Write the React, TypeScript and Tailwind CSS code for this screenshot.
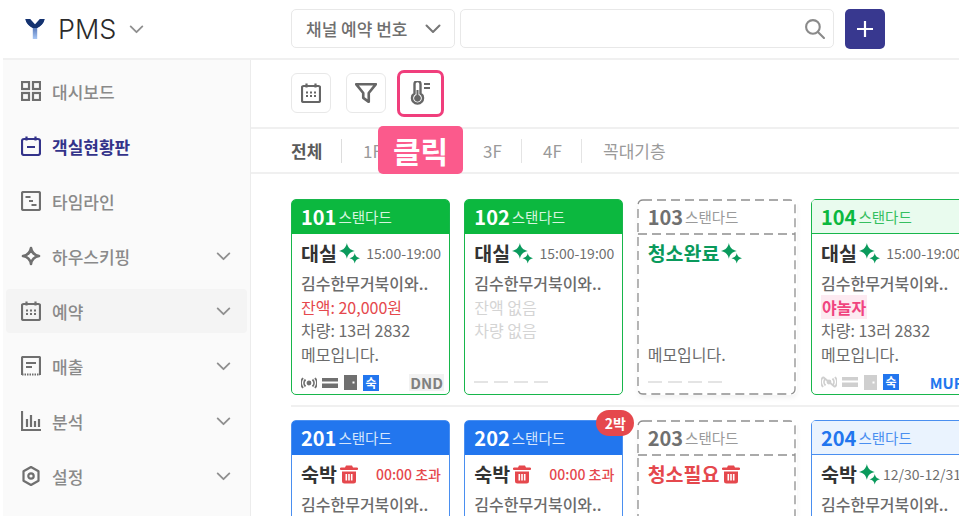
import React from 'react';

const FONT = '"Noto Sans CJK KR", "Noto Sans", sans-serif';

const Chevron = ({ className = '' }: { className?: string }) => (
  <svg viewBox="0 0 16 10" className={className} fill="none" stroke="currentColor" strokeWidth="2" strokeLinecap="round" strokeLinejoin="round">
    <path d="M1.500 1.500 8 8l6.500-6.500" />
  </svg>
);

const Sparkles = () => (
  <svg viewBox="0 0 20 20" className="w-[21px] h-[21px] ml-[2px] shrink-0 text-[#0a9a5c]" fill="currentColor">
    <path d="M7.500 0 C8.500 4.500 10.500 6.500 15 7.500 C10.500 8.500 8.500 10.500 7.500 15 C6.500 10.500 4.500 8.500 0 7.500 C4.500 6.500 6.500 4.500 7.500 0Z" />
    <path d="M15 9.500 C15.600 12.500 16.800 13.700 20 14.500 C16.800 15.300 15.600 16.500 15 19.500 C14.400 16.500 13.200 15.300 10 14.500 C13.200 13.700 14.400 12.500 15 9.500Z" />
  </svg>
);

const Trash = () => (
  <svg viewBox="0 0 18 20" className="w-[18px] h-[20px] shrink-0 text-[#e5484d]" fill="currentColor">
    <path d="M6 1.500h6l1 2h4a1 1 0 0 1 0 2.500H1a1 1 0 0 1 0-2.500h4z" />
    <path fillRule="evenodd" d="M2 7.500h14v9.500a2.500 2.500 0 0 1-2.500 2.500h-9A2.500 2.500 0 0 1 2 17zM5.500 10v6.500h1.600V10zm2.700 0v6.500h1.600V10zm2.700 0v6.500h1.600V10z" />
  </svg>
);

const GridIcon = () => (
  <svg viewBox="0 0 20 20" className="w-[20px] h-[20px]" fill="none" stroke="currentColor" strokeWidth="2.200">
    <rect x="1" y="1" width="7" height="7" /><rect x="12" y="1" width="7" height="7" />
    <rect x="1" y="12" width="7" height="7" /><rect x="12" y="12" width="7" height="7" />
  </svg>
);

const BoardIcon = () => (
  <svg viewBox="0 0 20 20" className="w-[20px] h-[20px]" fill="none" stroke="currentColor" strokeWidth="2.200" strokeLinejoin="round">
    <rect x="1" y="3" width="18" height="16" rx="2" />
    <path d="M5.500 0.500v4M14.500 0.500v4M6 11h8" />
  </svg>
);

const TimelineIcon = () => (
  <svg viewBox="0 0 20 20" className="w-[20px] h-[20px]" fill="none" stroke="currentColor" strokeWidth="2.200">
    <rect x="1" y="1" width="18" height="18" rx="1.500" />
    <path d="M4.500 6h5M8 10h4M10.500 14h5" />
  </svg>
);

const StarIcon = () => (
  <svg viewBox="0 0 20 20" className="w-[20px] h-[20px]" fill="none" stroke="currentColor" strokeWidth="2.600" strokeLinejoin="round">
    <path d="M10 2c.8 5 3 7.200 8 8-5 .8-7.200 3-8 8-.8-5-3-7.200-8-8 5-.8 7.200-3 8-8z" />
  </svg>
);

const CalendarIcon = () => (
  <svg viewBox="0 0 20 20" className="w-[20px] h-[20px]" fill="none" stroke="currentColor" strokeWidth="2.200" strokeLinejoin="round">
    <rect x="1" y="3" width="18" height="16" rx="1.500" />
    <path d="M5.500 0.500v4M14.500 0.500v4" />
    <path d="M5 9.500h2M9 9.500h2M13 9.500h2M5 13h2M9 13h2M13 13h2" strokeWidth="1.800" />
  </svg>
);

const ReceiptIcon = () => (
  <svg viewBox="0 0 20 20" className="w-[20px] h-[20px]" fill="none" stroke="currentColor" strokeWidth="2.200">
    <path d="M1 19V2a1 1 0 0 1 1-1h16a1 1 0 0 1 1 1v17" />
    <path d="M5 7h10M5 11h6" />
    <path d="M1 18.500h18" strokeDasharray="1.500 1" />
  </svg>
);

const ChartIcon = () => (
  <svg viewBox="0 0 20 20" className="w-[20px] h-[20px]" fill="none" stroke="currentColor" strokeWidth="2.200">
    <path d="M1 0v19h19" /><path d="M6 8v8M10 4v12M14 10v6M18 8v8" />
  </svg>
);

const GearIcon = () => (
  <svg viewBox="0 0 20 20" className="w-[20px] h-[20px]" fill="none" stroke="currentColor" strokeWidth="2.200" strokeLinejoin="round">
    <path d="M10 1l7.500 4.300v9.400L10 19l-7.500-4.300V5.300z" />
    <circle cx="10" cy="10" r="2.700" />
  </svg>
);

const MENU = [
  { label: '대시보드', icon: <GridIcon /> },
  { label: '객실현황판', icon: <BoardIcon />, active: true },
  { label: '타임라인', icon: <TimelineIcon /> },
  { label: '하우스키핑', icon: <StarIcon />, more: true },
  { label: '예약', icon: <CalendarIcon />, more: true, hover: true },
  { label: '매출', icon: <ReceiptIcon />, more: true },
  { label: '분석', icon: <ChartIcon />, more: true },
  { label: '설정', icon: <GearIcon />, more: true },
];

const Sidebar = () => (
  <aside className="w-[248px] shrink-0 bg-[#fafafa] border-r border-[#ececec] pt-[9px] px-[3px] flex flex-col gap-[11px]">
    {MENU.map(m => (
      <div
        key={m.label}
        className={`h-[44px] shrink-0 rounded-[4px] flex items-center pl-[15px] pr-[16px] gap-[11px] ${m.hover ? 'bg-[#f4f4f4]' : ''} ${m.active ? 'text-[#33338a]' : 'text-[#6f6f6f]'}`}
      >
        {m.icon}
        <span className={`text-[17px] leading-none flex-1 ${m.active ? 'font-bold' : 'font-medium text-[#8a8a8a]'}`}>{m.label}</span>
        {m.more && <Chevron className="w-[15px] h-[9px] text-[#8f8f8f]" />}
      </div>
    ))}
  </aside>
);

const Suk = () => (
  <span className="w-[16px] h-[16px] flex items-center justify-center bg-[#2276ee] text-white text-[12px] leading-none font-bold">숙</span>
);

const FooterIcons = ({ off }: { off?: boolean }) => (
  <div className={`flex items-center gap-[5px] ${off ? 'text-[#cfcfcf]' : 'text-[#707070]'}`}>
    <svg viewBox="0 0 16 12" className="w-[16px] h-[12px]" fill="none" stroke="currentColor" strokeWidth="1.800">
      <circle cx="8" cy="6" r="1.500" fill="currentColor" />
      <path d="M4.500 2.500a5 5 0 0 0 0 7M11.500 2.500a5 5 0 0 1 0 7M2 1a8 8 0 0 0 0 10M14 1a8 8 0 0 1 0 10" />
      {off && <path d="M2 1l12 10" />}
    </svg>
    <svg viewBox="0 0 16 12" className="w-[16px] h-[12px]" fill="currentColor">
      <rect x="0" y="1" width="16" height="3.500" /><rect x="0" y="6.500" width="16" height="4.500" />
    </svg>
    <svg viewBox="0 0 13 15" className="w-[13px] h-[15px] mx-[1px]" fill="currentColor">
      <path fillRule="evenodd" d="M0 0h13v15H0zM8.500 6.500v2h2v-2z" />
    </svg>
    <Suk />
  </div>
);

const Dashes = () => (
  <div className="flex gap-[6px] h-[16px] items-center">
    {[0, 1, 2, 3].map(i => <div key={i} className="w-[14px] h-[2px] bg-[#e4e4e4]" />)}
  </div>
);

type CardProps = {
  no: string;
  tone: 'green' | 'blue' | 'lightGreen' | 'lightBlue' | 'dashed';
  status: string;
  statusColor?: string;
  icon?: 'spark' | 'trash';
  time?: string;
  timeRed?: boolean;
  lines?: React.ReactNode[];
  footer?: React.ReactNode;
  badge?: string;
};

const TONES = {
  green: { box: 'border-[#17b64b]', head: 'bg-[#0cb83f] text-white', sub: 'text-[#d6f5df]' },
  blue: { box: 'border-[#4a8ff0]', head: 'bg-[#2276ee] text-white', sub: 'text-[#d5e5fc]' },
  lightGreen: { box: 'border-[#17b64b]', head: 'bg-[#e9fbee] text-[#0cb83f] border-b border-[#17b64b]', sub: 'text-[#35bf60]' },
  lightBlue: { box: 'border-[#4a8ff0]', head: 'bg-[#eaf3fe] text-[#2276ee] border-b border-[#4a8ff0]', sub: 'text-[#4a8ff0]' },
  dashed: { box: 'border-transparent', head: 'text-[#707070]', sub: 'text-[#9a9a9a]' },
};

const Card = ({ no, tone, status, statusColor = 'text-[#333333]', icon, time, timeRed, lines = [], footer, badge }: CardProps) => {
  const t = TONES[tone];
  return (
    <div className={`relative w-[159px] h-[196px] shrink-0 rounded-[5px] border-[1.5px] bg-white ${t.box} ${tone === 'dashed' ? 'shadow-[0_3px_5px_rgba(0,0,0,0.05)]' : ''}`}>
      {tone === 'dashed' && (
        <svg width="159" height="196" className="absolute -left-[1.5px] -top-[1.5px] text-[#8f8f8f]" fill="none" stroke="currentColor" strokeWidth="1.300">
          <rect x="1" y="1" width="157" height="194" rx="5" strokeDasharray="9 5" />
          <path d="M1 35h157" strokeDasharray="9 5" />
        </svg>
      )}
      {badge && (
        <div className="absolute -top-[11px] -right-[12px] z-10 w-[38px] h-[26px] rounded-full bg-[#e5484d] text-white text-[14px] font-bold leading-[26px] text-center">{badge}</div>
      )}
      <div className={`h-[34px] flex items-center pl-[9px] gap-[2px] rounded-t-[3px] overflow-hidden ${t.head}`}>
        <span className="text-[20px] font-bold leading-none">{no}</span>
        <span className={`text-[14.500px] leading-none mt-[1px] ${t.sub}`}>스탠다드</span>
      </div>
      <div className="h-[160px] pl-[9px] pr-[8px] pt-[7px] flex flex-col">
        <div className="flex items-center h-[24px] whitespace-nowrap">
          <span className={`text-[19.500px] font-bold leading-none ${statusColor}`}>{status}</span>
          {icon === 'spark' ? <Sparkles /> : icon === 'trash' ? <span className="ml-[3px] flex"><Trash /></span> : null}
          {time && <span className={`ml-auto text-[14px] leading-none ${timeRed ? 'text-[#e5484d] font-medium' : 'text-[#6f6f6f]'}`}>{time}</span>}
        </div>
        <div className="mt-[7px] h-[94px] flex flex-col text-[16px] leading-[23.500px] whitespace-nowrap text-[#6b6b6b]">
          {lines.map((l, i) => <div key={i} className="h-[23.500px]">{l}</div>)}
        </div>
        <div className="mt-[8px] -mr-[3px] flex items-center justify-between">{footer}</div>
      </div>
    </div>
  );
};

const NAME = <span className="font-medium">김수한무거북이와..</span>;
const NONE = (s: string) => <span className="text-[#d4d4d4]">{s}</span>;
const CAR = '차량: 13러 2832';
const MEMO = '메모입니다.';

const Toolbtn = ({ children }: { children: React.ReactNode }) => (
  <div className="w-[40px] h-[40px] rounded-[6px] border border-[#e8e8e8] flex items-center justify-center text-[#666666]">{children}</div>
);

const FLOORS = ['1F', '', '3F', '4F', '꼭대기층'];

export default function App() {
  return (
    <div className="w-[959px] h-[516px] overflow-hidden bg-white flex flex-col" style={{ fontFamily: FONT }}>
      {/* Top bar */}
      <header className="h-[60px] shrink-0 flex border-b-2 border-[#f0f0f0] ml-[3px]">
        <div className="w-[288px] shrink-0 flex items-center pl-[22px]">
          <svg viewBox="0 0 20 22" className="w-[20px] h-[22px]">
            <defs>
              <linearGradient id="stem" x1="0" y1="0" x2="0" y2="1">
                <stop offset="0" stopColor="#1d3f8f" /><stop offset="1" stopColor="#a9c8f5" />
              </linearGradient>
            </defs>
            <path d="M0.500 1 L5 1 L10 6.500 L15 1 L19.500 1 C19 5 15.500 8.500 12.200 10 L12.200 21 L7.800 21 L7.800 10 C4.500 8.500 1 5 0.500 1Z" fill="url(#stem)" />
            <path d="M0.500 1 L5 1 L10 6.500 L15 1 L19.500 1 C19 5 15.500 8.500 12.200 10 L7.800 10 C4.500 8.500 1 5 0.500 1Z" fill="#14326f" />
          </svg>
          <span className="ml-[13px] text-[27px] leading-none text-[#2b2b2b] font-light" style={{ fontFamily: 'Inter, sans-serif' }}>PMS</span>
          <Chevron className="ml-[13px] w-[15px] h-[9px] text-[#8f8f8f]" />
        </div>
        <div className="flex items-center gap-[5px] pb-[1px]">
          <div className="w-[164px] h-[39px] rounded-[5px] border border-[#e8e8e8] flex items-center pl-[14px] pr-[13px] justify-between text-[#6f6f6f]">
            <span className="text-[17px] font-medium whitespace-nowrap">채널 예약 번호</span>
            <Chevron className="w-[16px] h-[10px] text-[#777777]" />
          </div>
          <div className="w-[374px] h-[39px] rounded-[5px] border border-[#e8e8e8] flex items-center justify-end pr-[8px] text-[#8a8a8a]">
            <svg viewBox="0 0 20 20" className="w-[21px] h-[21px]" fill="none" stroke="currentColor" strokeWidth="2" strokeLinecap="round">
              <circle cx="8.500" cy="8.500" r="6.500" /><path d="M13.500 13.500 19 19" />
            </svg>
          </div>
          <div className="ml-[6px] w-[40px] h-[40px] rounded-[5px] bg-[#38388f] flex items-center justify-center">
            <svg viewBox="0 0 16 16" className="w-[16px] h-[16px]" stroke="white" strokeWidth="2.200"><path d="M8 0v16M0 8h16" /></svg>
          </div>
        </div>
      </header>

      <div className="flex-1 min-h-0 flex ml-[3px]">
        <Sidebar />

        <main className="flex-1 min-w-0 flex flex-col overflow-hidden">
          {/* Tools */}
          <div className="h-[69px] shrink-0 border-b-2 border-[#f0f0f0] flex items-center pl-[40px] pb-[1px]">
            <Toolbtn><CalendarIcon /></Toolbtn>
            <div className="ml-[15px]">
              <Toolbtn>
                <svg viewBox="0 0 20 20" className="w-[22px] h-[22px]" fill="none" stroke="currentColor" strokeWidth="2.400" strokeLinejoin="round">
                  <path d="M1 2h18l-6.500 8v8L7.500 14.500V10z" />
                </svg>
              </Toolbtn>
            </div>
            <div className="ml-[11px] w-[47px] h-[47px] rounded-[7px] border-[3px] border-[#f03e7c] flex items-center justify-center text-[#666666]">
              <svg viewBox="0 0 22 24" className="w-[22px] h-[24px]" fill="none" stroke="currentColor">
                <path d="M4.500 3a3 3 0 0 1 6 0V12.500a5.500 5.500 0 1 1-6 0z" strokeWidth="2.400" fill="none" />
                <path d="M6.500 9h2v5a3.400 3.400 0 1 1-2 0z" fill="currentColor" stroke="none" />
                <path d="M14 3h6M14 7h6" strokeWidth="2" />
              </svg>
            </div>
          </div>

          {/* Floor tabs */}
          <div className="relative h-[45px] shrink-0 border-b-2 border-[#f0f0f0] flex items-center pl-[40px] text-[17px]">
            <span className="font-bold text-[#5a5a5a] w-[51px] border-r border-[#dddddd] h-[24px] leading-[24px] whitespace-nowrap">전체</span>
            {FLOORS.map((f, i) => (
              <span key={i} className={`text-[#9a9a9a] h-[24px] leading-[24px] w-[60px] pl-[21px] whitespace-nowrap ${i < 4 ? 'border-r border-[#e4e4e4]' : 'border-none'}`}>{f}</span>
            ))}
            <div className="absolute left-[127px] -top-[3px] w-[85px] h-[48px] rounded-[5px] bg-[#fb5a8c] text-white text-[30px] font-bold flex items-center justify-center leading-none">클릭</div>
          </div>

          {/* Rooms */}
          <div className="pt-[25px] pl-[40px] flex flex-col">
            <div className="flex gap-[14.330px] w-[760px]">
              <Card
                no="101" tone="green" status="대실" icon="spark" time="15:00-19:00"
                lines={[NAME, <span className="text-[#e5484d]">잔액: 20,000원</span>, CAR, MEMO]}
                footer={<><FooterIcons /><span className="text-[15px] font-bold leading-none text-[#808080] bg-[#f2f2f2] px-[1px] py-[1px]">DND</span></>}
              />
              <Card
                no="102" tone="green" status="대실" icon="spark" time="15:00-19:00"
                lines={[NAME, NONE('잔액 없음'), NONE('차량 없음')]}
                footer={<Dashes />}
              />
              <Card
                no="103" tone="dashed" status="청소완료" statusColor="text-[#0a9a5c]" icon="spark"
                lines={['', '', '', MEMO]}
                footer={<Dashes />}
              />
              <Card
                no="104" tone="lightGreen" status="대실" icon="spark" time="15:00-19:00"
                lines={[NAME, <span className="font-bold text-[#f0447f] bg-[#fdeaf1] px-[1px]">야놀자</span>, CAR, MEMO]}
                footer={<><FooterIcons off /><span className="text-[15px] font-bold leading-none text-[#2276ee]">MUR</span></>}
              />
            </div>

            <div className="h-[2px] bg-[#f0f0f0] mt-[10px] mb-[13px] w-[669px]" />

            <div className="flex gap-[14.330px] w-[760px]">
              <Card no="201" tone="blue" status="숙박" icon="trash" time="00:00 초과" timeRed lines={[NAME]} />
              <Card no="202" tone="blue" status="숙박" icon="trash" time="00:00 초과" timeRed lines={[NAME]} badge="2박" />
              <Card no="203" tone="dashed" status="청소필요" statusColor="text-[#e5484d]" icon="trash" />
              <Card no="204" tone="lightBlue" status="숙박" icon="spark" time="12/30-12/31" lines={[NAME]} />
            </div>
          </div>
        </main>
      </div>
    </div>
  );
}
